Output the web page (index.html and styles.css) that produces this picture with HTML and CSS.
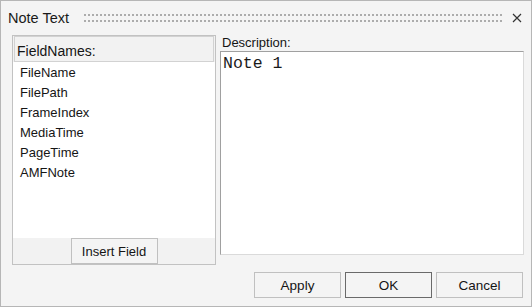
FILE: index.html
```html
<!DOCTYPE html>
<html lang="en">
<head>
    <meta charset="UTF-8">
    <title>Note Text</title>
    <link rel="stylesheet" href="styles.css">
</head>
<body>

    <div class="window">
        <div class="titlebar">
            <span class="title">Note Text</span>
            <div class="grip"></div>
            <button class="close-button" title="Close">
                <svg width="10" height="10" viewBox="0 0 10 10">
                    <path d="M1 1 L9 9 M9 1 L1 9" stroke="#333" stroke-width="1.2" fill="none"/>
                </svg>
            </button>
        </div>

        <div class="content">
            <div class="field-panel">
                <div class="field-header">FieldNames:</div>
                <ul class="field-list">
                    <li>FileName</li>
                    <li>FilePath</li>
                    <li>FrameIndex</li>
                    <li>MediaTime</li>
                    <li>PageTime</li>
                    <li>AMFNote</li>
                </ul>
                <div class="field-footer">
                    <button class="dlg-button insert-button">Insert Field</button>
                </div>
            </div>

            <div class="description">
                <label for="noteText">Description:</label>
                <textarea id="noteText">Note 1</textarea>
            </div>
        </div>

        <div class="footer">
            <button class="dlg-button">Apply</button>
            <button class="dlg-button default-button">OK</button>
            <button class="dlg-button">Cancel</button>
        </div>
    </div>

</body>
</html>
```

FILE: styles.css
```css
body {
    margin: 0;
    font-family: 'Liberation Sans', Arial, sans-serif;
    font-size: 13px;
    color: #151515;
}
.window {
    width: 532px;
    height: 307px;
    box-sizing: border-box;
    border: 1px solid #b6b6b6;
    background-color: #f4f4f4;
}

.titlebar {
    display: flex;
    align-items: center;
    height: 34px;
    padding-left: 7px;
}
.title {
    font-size: 14.5px;
    color: #1a1a1a;
}
.grip {
    flex: 1;
    height: 8px;
    margin-left: 15px;
    background-image:
        linear-gradient(90deg, #acacac 2px, transparent 2px),
        linear-gradient(90deg, #acacac 2px, transparent 2px);
    background-size: 4px 2px, 4px 2px;
    background-position: 0 0, 0 6px;
    background-repeat: repeat-x;
}
.close-button {
    display: flex;
    width: 10px;
    height: 10px;
    margin: 0 9px 0 10px;
    padding: 0;
    border: none;
    background: none;
}

.content {
    display: flex;
    gap: 4px;
    height: 230px;
    padding: 0 7px 0 11px;
}
.field-panel {
    display: flex;
    flex-direction: column;
    width: 204px;
    box-sizing: border-box;
    border: 1px solid #c2c2c2;
    background-color: #f2f2f2;
}
.field-header {
    height: 26px;
    box-sizing: border-box;
    margin: 0 1px;
    padding: 6px 0 0 2px;
    border: 1px solid #d2d2d2;
    background-color: #f2f2f2;
    font-size: 14px;
}
.field-list {
    flex: 1;
    list-style-type: none;
    margin: 0;
    padding: 1px 0 0;
    background-color: #fff;
}
.field-list li {
    height: 20px;
    line-height: 20px;
    padding-left: 7px;
}
.field-footer {
    display: flex;
    justify-content: center;
    height: 26px;
}

.description {
    display: flex;
    flex-direction: column;
    width: 304px;
}
.description label {
    height: 16px;
    line-height: 16px;
    padding-left: 2px;
}
.description textarea {
    height: 204px;
    box-sizing: border-box;
    margin: 0;
    padding: 3px 2px;
    border: 1px solid;
    border-color: #a0a0a0 #dadada #dadada #a0a0a0;
    background-color: #fff;
    font-family: 'Liberation Mono', 'Courier New', monospace;
    font-size: 16.5px;
    line-height: 18px;
    color: #1a1a1a;
    resize: none;
    outline: none;
}

.footer {
    display: flex;
    justify-content: flex-end;
    gap: 4px;
    margin-top: 7px;
    padding-right: 8px;
}
.dlg-button {
    width: 87px;
    height: 26px;
    box-sizing: border-box;
    padding: 0;
    border: 1px solid #c0c0c0;
    background-color: #f4f4f4;
    font-family: inherit;
    font-size: 13.5px;
    color: #151515;
}
.default-button {
    border-color: #6a6a6a;
}
.insert-button {
    height: 26px;
    font-size: 13px;
}
```
